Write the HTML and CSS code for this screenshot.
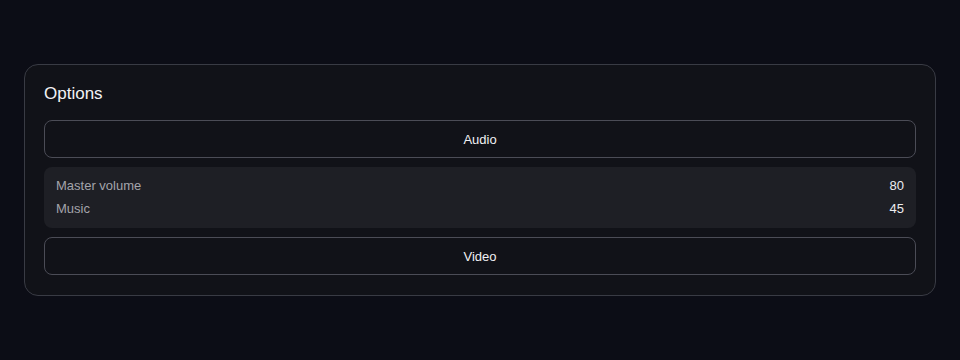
FILE: index.html
```html
<!DOCTYPE html>
<html>
<head>
<meta charset="utf-8">
<link rel="stylesheet" href="styles.css">
</head>
<body>
<div class="page">
  <section class="card">
    <h2 class="title">Options</h2>
    <button class="section-btn">Audio</button>
    <div class="panel">
      <div class="row"><span class="label">Master volume</span><span class="value">80</span></div>
      <div class="row"><span class="label">Music</span><span class="value">45</span></div>
    </div>
    <button class="section-btn">Video</button>
  </section>
</div>
</body>
</html>
```
FILE: styles.css
```css
html, body {
  margin: 0;
  padding: 0;
  background: #0c0d16;
  font-family: "Liberation Sans", Arial, sans-serif;
}
.page {
  padding: 64px 24px;
}
.card {
  background: #111218;
  border: 1px solid #393b44;
  border-radius: 14px;
  padding: 19px 19px 20px;
  display: flex;
  flex-direction: column;
  gap: 9px;
}
.title {
  margin: 0 0 7px;
  font-size: 17px;
  font-weight: 400;
  color: #f2f2f5;
  line-height: 20px;
}
.section-btn {
  font-family: inherit;
  font-size: 13px;
  color: #f0f0f3;
  background: #111218;
  border: 1px solid #4b4c56;
  border-radius: 8px;
  height: 38px;
  padding: 0;
  cursor: pointer;
}
.panel {
  background: #1e1f25;
  border-radius: 8px;
  padding: 9px 12px;
  display: flex;
  flex-direction: column;
  gap: 3px;
}
.row {
  display: flex;
  justify-content: space-between;
  font-size: 13px;
  line-height: 20px;
}
.label { color: #a3a4ab; }
.value { color: #ececf0; }
```
